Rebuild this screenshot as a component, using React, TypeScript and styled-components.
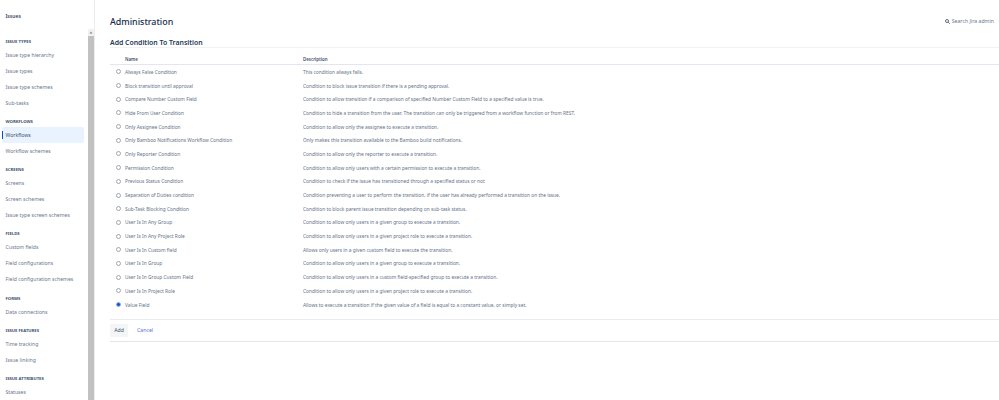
import React from "react";
import styled, { createGlobalStyle } from "styled-components";

const Global = createGlobalStyle`
  html, body { margin: 0; padding: 0; background: #fff; overflow: hidden; }
  body { font-family: "Noto Sans", "Open Sans", sans-serif; color: #42526e; }
`;

const Page = styled.div`
  display: flex;
  width: 999px;
  height: 400px;
  overflow: hidden;
`;

const Sidebar = styled.aside`
  position: relative;
  flex: 0 0 95px;
  height: 400px;
  box-sizing: border-box;
  border-right: 1px solid #ebecf0;
  overflow: hidden;
  padding: 11px 0 0 2px;
`;

const Scrollbar = styled.div`
  position: absolute;
  top: 29px;
  right: 0;
  bottom: 0;
  width: 6px;
  background: #f1f1f1;
  display: flex;
  flex-direction: column;
`;

const ScrollArrow = styled.div`
  flex: 0 0 7px;
  display: flex;
  align-items: center;
  justify-content: center;
`;

const ScrollThumb = styled.div`
  flex: 1;
  background: #c1c1c1;
`;

const Project = styled.div`
  font-size: 5px;
  line-height: 10px;
  font-weight: 600;
  color: #344563;
  padding-left: 3.5px;
  margin-bottom: 15.5px;
`;

const GroupTitle = styled.div`
  font-size: 4.25px;
  line-height: 8px;
  font-weight: 700;
  color: #42526e;
  text-transform: uppercase;
  padding-left: 3.5px;
  height: 8px;
  margin-top: 6.25px;
  margin-bottom: 2px;
`;

const NavItem = styled.div<{ $active?: boolean }>`
  position: relative;
  width: 82px;
  height: 16px;
  display: flex;
  align-items: center;
  box-sizing: border-box;
  padding-left: 3.5px;
  font-size: 5.15px;
  border-radius: 2px;
  white-space: nowrap;
  color: ${(p) => (p.$active ? "#42526e" : "#6b778c")};
  background: ${(p) => (p.$active ? "#e9f2ff" : "transparent")};
  ${(p) =>
    p.$active &&
    `&::before { content: ""; position: absolute; left: 0; top: 4px; bottom: 4px; width: 1px; background: #0052cc; }`}
`;

const Main = styled.main`
  flex: 1;
  min-width: 0;
  padding: 0 0 0 15px;
`;

const Header = styled.header`
  display: flex;
  align-items: center;
  justify-content: space-between;
  height: 22px;
  padding-top: 10px;
  padding-right: 5px;
`;

const Title = styled.h1`
  margin: 0;
  font-size: 8.9px;
  font-weight: 500;
  color: #172b4d;
`;

const SearchLink = styled.div`
  display: flex;
  align-items: center;
  gap: 2px;
  font-size: 5.2px;
  color: #6b778c;
`;

const FormTitle = styled.h2`
  margin: 4px 0 0;
  height: 12px;
  line-height: 13px;
  font-size: 6.9px;
  font-weight: 600;
  color: #253858;
  box-sizing: border-box;
  border-bottom: 1px solid #f1f2f4;
`;

const HeadRow = styled.div`
  display: grid;
  grid-template-columns: 15px 178px 1fr;
  height: 17px;
  padding-top: 6px;
  align-items: center;
  box-sizing: border-box;
  border-bottom: 1px solid #e4e5f0;
  font-size: 4.4px;
  font-weight: 600;
  color: #42526e;
`;

const Row = styled.div`
  display: grid;
  grid-template-columns: 15px 178px 1fr;
  height: 13.7px;
  align-items: center;
  font-size: 4.85px;
  color: #667287;
  white-space: nowrap;
`;

const Radio = styled.span<{ $checked?: boolean }>`
  justify-self: center;
  margin-left: 1px;
  width: 5px;
  height: 5px;
  box-sizing: border-box;
  border-radius: 50%;
  border: ${(p) => (p.$checked ? "1.5px solid #8fb0f2" : "0.6px solid #a0a6b0")};
  background: ${(p) => (p.$checked ? "#1c4fd0" : "#fff")};
`;

const Actions = styled.div`
  display: flex;
  align-items: center;
  gap: 9px;
  margin-top: 7.4px;
  height: 23px;
  box-sizing: border-box;
  border-top: 1px solid #ebecf0;
  border-bottom: 1px solid #e4e5e8;
`;

const AddButton = styled.div`
  width: 18px;
  height: 13px;
  display: flex;
  align-items: center;
  justify-content: center;
  background: #f4f5f7;
  border-radius: 2px;
  font-size: 5.2px;
  color: #42526e;
`;

const CancelLink = styled.div`
  font-size: 5.2px;
  color: #5b6fd9;
`;

const groups: { title: string; items: string[] }[] = [
  { title: "Issue types", items: ["Issue type hierarchy", "Issue types", "Issue type schemes", "Sub-tasks"] },
  { title: "Workflows", items: ["Workflows", "Workflow schemes"] },
  { title: "Screens", items: ["Screens", "Screen schemes", "Issue type screen schemes"] },
  { title: "Fields", items: ["Custom fields", "Field configurations", "Field configuration schemes"] },
  { title: "Forms", items: ["Data connections"] },
  { title: "Issue features", items: ["Time tracking", "Issue linking"] },
  { title: "Issue attributes", items: ["Statuses"] },
];

const rows: [string, string][] = [
  ["Always False Condition", "This condition always fails."],
  ["Block transition until approval", "Condition to block issue transition if there is a pending approval."],
  ["Compare Number Custom Field", "Condition to allow transition if a comparison of specified Number Custom Field to a specified value is true."],
  ["Hide From User Condition", "Condition to hide a transition from the user. The transition can only be triggered from a workflow function or from REST."],
  ["Only Assignee Condition", "Condition to allow only the assignee to execute a transition."],
  ["Only Bamboo Notifications Workflow Condition", "Only makes this transition available to the Bamboo build notifications."],
  ["Only Reporter Condition", "Condition to allow only the reporter to execute a transition."],
  ["Permission Condition", "Condition to allow only users with a certain permission to execute a transition."],
  ["Previous Status Condition", "Condition to check if the issue has transitioned through a specified status or not"],
  ["Separation of Duties condition", "Condition preventing a user to perform the transition, if the user has already performed a transition on the issue."],
  ["Sub-Task Blocking Condition", "Condition to block parent issue transition depending on sub-task status."],
  ["User Is In Any Group", "Condition to allow only users in a given group to execute a transition."],
  ["User Is In Any Project Role", "Condition to allow only users in a given project role to execute a transition."],
  ["User Is In Custom field", "Allows only users in a given custom field to execute the transition."],
  ["User Is In Group", "Condition to allow only users in a given group to execute a transition."],
  ["User Is In Group Custom Field", "Condition to allow only users in a custom field-specified group to execute a transition."],
  ["User Is In Project Role", "Condition to allow only users in a given project role to execute a transition."],
  ["Value Field", "Allows to execute a transition if the given value of a field is equal to a constant value, or simply set."],
];

export default function App() {
  return (
    <Page>
      <Global />
      <Sidebar>
        <Project>Issues</Project>
        {groups.map((g) => (
          <section key={g.title}>
            <GroupTitle>{g.title}</GroupTitle>
            {g.items.map((i) => (
              <NavItem key={i} $active={i === "Workflows"}>{i}</NavItem>
            ))}
          </section>
        ))}
        <Scrollbar>
          <ScrollArrow>
            <svg width="4" height="3" viewBox="0 0 4 3"><path d="M2 0.5 L3.6 2.5 H0.4 Z" fill="#8a8a8a" /></svg>
          </ScrollArrow>
          <ScrollThumb />
        </Scrollbar>
      </Sidebar>
      <Main>
        <Header>
          <Title>Administration</Title>
          <SearchLink>
            <svg width="5" height="5" viewBox="0 0 10 10" fill="none" stroke="#505f79" strokeWidth="1.8">
              <circle cx="4" cy="4" r="3" />
              <path d="M6.2 6.2 L9.5 9.5" />
            </svg>
            Search Jira admin
          </SearchLink>
        </Header>
        <FormTitle>Add Condition To Transition</FormTitle>
        <HeadRow>
          <span />
          <span>Name</span>
          <span>Description</span>
        </HeadRow>
        {rows.map(([name, desc]) => (
          <Row key={name}>
            <Radio $checked={name === "Value Field"} />
            <span>{name}</span>
            <span>{desc}</span>
          </Row>
        ))}
        <Actions>
          <AddButton>Add</AddButton>
          <CancelLink>Cancel</CancelLink>
        </Actions>
      </Main>
    </Page>
  );
}
